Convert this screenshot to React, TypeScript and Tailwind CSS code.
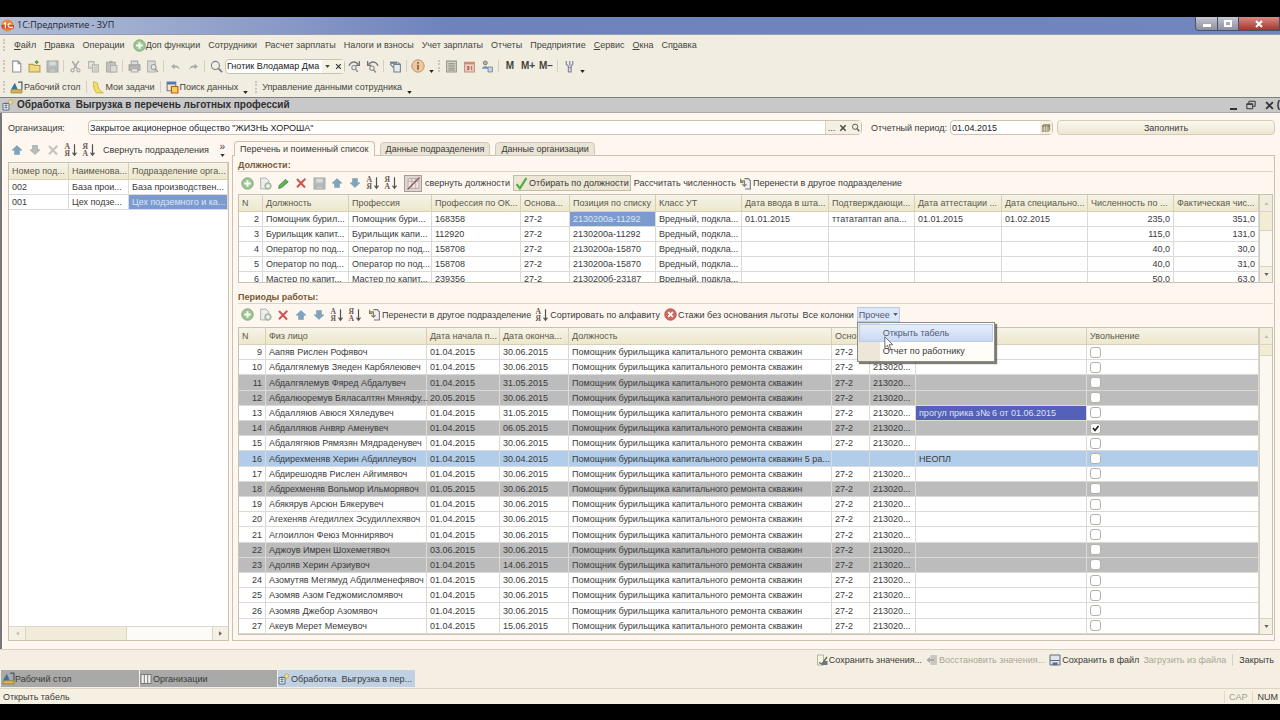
import type { ReactNode } from "react";

const menu = ["Файл", "Правка", "Операции", "Доп функции", "Сотрудники", "Расчет зарплаты", "Налоги и взносы", "Учет зарплаты", "Отчеты", "Предприятие", "Сервис", "Окна", "Справка"];
const underlined: Record<string, number> = { "Файл": 0, "Правка": 0, "Сервис": 0, "Окна": 0, "Справка": 2 };

const departments = [
  ["002", "База прои...", "База производствен..."],
  ["001", "Цех подзе...", "Цех подземного и ка..."],
];

const positionHeads = ["N", "Должность", "Профессия", "Профессия по ОК...", "Основа...", "Позиция по списку", "Класс УТ", "Дата ввода в шта...", "Подтверждающи...", "Дата аттестации ...", "Дата специально...", "Численность по ...", "Фактическая чис..."];
const positions = [
  ["2", "Помощник бурил...", "Помощник бури...", "168358", "27-2", "2130200а-11292", "Вредный, подкла...", "01.01.2015", "ттататаптап апа...", "01.01.2015", "01.02.2015", "235,0", "351,0"],
  ["3", "Бурильщик капит...", "Бурильщик капи...", "112920", "27-2", "2130200а-11292", "Вредный, подкла...", "", "", "", "", "115,0", "131,0"],
  ["4", "Оператор по под...", "Оператор по под...", "158708", "27-2", "2130200а-15870", "Вредный, подкла...", "", "", "", "", "40,0", "30,0"],
  ["5", "Оператор по под...", "Оператор по под...", "158708", "27-2", "2130200а-15870", "Вредный, подкла...", "", "", "", "", "40,0", "31,0"],
  ["6", "Мастер по капит...", "Мастер по капит...", "239356", "27-2", "2130200б-23187", "Вредный, подкла...", "", "", "", "", "50,0", "63,0"],
];

type Period = { n: number; name: string; from: string; to: string; tone?: "gray" | "blue"; note?: string; fired?: boolean };
const periods: Period[] = [
  { n: 9, name: "Аапяв Рислен Рофявоч", from: "01.04.2015", to: "30.06.2015" },
  { n: 10, name: "Абдалгялемув Зяеден Карбялеювеч", from: "01.04.2015", to: "30.06.2015" },
  { n: 11, name: "Абдалгялемув Фяред Абдалувеч", from: "01.04.2015", to: "31.05.2015", tone: "gray" },
  { n: 12, name: "Абдалюоремув Бяласалтян Мяняфу...", from: "20.05.2015", to: "30.06.2015", tone: "gray" },
  { n: 13, name: "Абдалляюв Авюся Хяледувеч", from: "01.04.2015", to: "31.05.2015", note: "прогул прика з№ 6 от 01.06.2015" },
  { n: 14, name: "Абдалляюв Анвяр Аменувеч", from: "01.04.2015", to: "06.05.2015", tone: "gray", fired: true },
  { n: 15, name: "Абдалягяюв Рямязян Мядраденувеч", from: "01.04.2015", to: "30.06.2015" },
  { n: 16, name: "Абдирехменяв Херин Абдиллеувоч", from: "01.04.2015", to: "30.04.2015", tone: "blue", note: "НЕОПЛ" },
  { n: 17, name: "Абдирешодяв Рислен Айгимявоч", from: "01.04.2015", to: "30.06.2015" },
  { n: 18, name: "Абдрехменяв Вольмор Ильморявоч", from: "01.05.2015", to: "30.06.2015", tone: "gray" },
  { n: 19, name: "Абякярув Арсюн Бякерувеч", from: "01.04.2015", to: "30.06.2015" },
  { n: 20, name: "Агехеняв Агедиллех Эсудиллехявоч", from: "01.04.2015", to: "30.06.2015" },
  { n: 21, name: "Аглоиллон Феюз Моннирявоч", from: "01.04.2015", to: "30.06.2015" },
  { n: 22, name: "Аджоув Имрен Шохеметявоч", from: "03.06.2015", to: "30.06.2015", tone: "gray" },
  { n: 23, name: "Адоляв Херин Арзиувоч", from: "01.04.2015", to: "14.06.2015", tone: "gray" },
  { n: 24, name: "Азомутяв Мегямуд Абдилменефявоч", from: "01.04.2015", to: "30.06.2015" },
  { n: 25, name: "Азомяв Азом Геджомисломявоч", from: "01.04.2015", to: "30.06.2015" },
  { n: 26, name: "Азомяв Джебор Азомявоч", from: "01.04.2015", to: "30.06.2015" },
  { n: 27, name: "Акеув Мерет Мемеувоч", from: "01.04.2015", to: "15.06.2015" },
];

const rowTone = { gray: "bg-[#bcbcbc]", blue: "bg-[#b1cdea]" };

function Svg({ children, className = "size-[13px]" }: { children: ReactNode; className?: string }) {
  return (
    <svg viewBox="0 0 12 12" fill="none" className={`${className} shrink-0`} aria-hidden="true">
      {children}
    </svg>
  );
}

const NewDoc = () => <Svg><path d="M2.500 1h5L10 3.500V11H2.500z" fill="#fff" stroke="#8a8f98" /><path d="M7.500 1v2.500H10" stroke="#8a8f98" /></Svg>;
const OpenFolder = () => <Svg><path d="M1 4h4l1 1h5v6H1z" fill="#f1d980" stroke="#b79b4a" /><path d="M8 4V1M6.500 2.500 8 .8l1.600 1.700" stroke="#58a03c" strokeWidth="1.200" /></Svg>;
const Save = () => <Svg><path d="M1 1h10v10H1z" fill="#b9bcbc" stroke="#a3a6a6" /><path d="M3 1.500h6v3.500H3z" fill="#d9dbd8" /><path d="M3 7.500h6V11H3zM3 9h6" fill="#cfd1ce" stroke="#a3a6a6" strokeWidth=".6" /></Svg>;
const Cut = () => <Svg><path d="m3 1 4.500 7M9 1 4.500 8" stroke="#a6a6a2" strokeWidth="1.500" /><circle cx="3.300" cy="9.500" r="1.500" stroke="#a6a6a2" /><circle cx="8.700" cy="9.500" r="1.500" stroke="#a6a6a2" /></Svg>;
const Copy = () => <Svg><path d="M1.500 1.500h5v6h-5z" fill="#e6e4dc" stroke="#b4b3ad" /><path d="M5 4.500h5.500v6.500H5z" fill="#dedcd4" stroke="#b4b3ad" /><path d="M6.500 7h3M6.500 9h3" stroke="#b4b3ad" strokeWidth=".7" /></Svg>;
const Paste = () => <Svg><path d="M1.500 2h8v9h-8z" fill="#c4c3bd" stroke="#aaa9a3" /><path d="M4 .8h3v2H4z" fill="#aaa9a3" /><path d="M5 5h6v6H5z" fill="#dddbd3" stroke="#b4b3ad" /></Svg>;
const Print = () => <Svg><path d="M3 1h6v4H3z" fill="#dedede" stroke="#aaa" /><path d="M1 4.500h10v5H1z" fill="#b4b4b4" stroke="#a0a0a0" /><path d="M3 8h6v3H3z" fill="#e4e4e4" stroke="#aaa" /></Svg>;
const Preview = () => <Svg><path d="M1.500 1h7v10h-7z" fill="#dcdcd8" stroke="#b0b0ac" /><circle cx="7" cy="6.500" r="2.300" fill="#e8e8e8" stroke="#9f9f9f" /><path d="m8.500 8 2.500 3" stroke="#9f9f9f" strokeWidth="1.400" /></Svg>;
const Undo = () => <Svg><path d="M5 3.500 2 6l3 2.500V7c2-.3 3.500 0 5 2-.3-2.700-2-4-5-4z" fill="#a8a8a4" /></Svg>;
const Redo = () => <Svg><path d="m7 3.500 3 2.500-3 2.500V7c-2-.3-3.500 0-5 2 .3-2.700 2-4 5-4z" fill="#a8a8a4" /></Svg>;
const Search = ({ color = "#77828c" }: { color?: string }) => <Svg><circle cx="5" cy="5" r="3.700" stroke={color} /><path d="m7.700 7.700 3.500 3.500" stroke={color} strokeWidth="1.700" /></Svg>;
const FindNext = () => <Svg><path d="M1 5.500C2 1.500 7 .5 9.500 4M10.500 1v4H7" stroke="#6e7377" strokeWidth="1.200" /><circle cx="5.500" cy="7" r="2" stroke="#8a8f93" /><path d="m7 8.500 2 2.500" stroke="#8a8f93" strokeWidth="1.300" /></Svg>;
const FindPrev = () => <Svg><path d="M11 5.500C10 1.500 5 .5 2.500 4M1.500 1v4H5" stroke="#6e7377" strokeWidth="1.200" /><circle cx="5.500" cy="7.500" r="2" stroke="#8a8f93" /><path d="m7 9 2 2.500" stroke="#8a8f93" strokeWidth="1.300" /></Svg>;
const WindowsIcon = () => <Svg><path d="M1 1.500h6.500v2H1z" fill="#667b8c" /><path d="M4.500 4h6v7h-6z" fill="#e8ecee" stroke="#6f8291" /><path d="M1 3.500 4 7M8 2l2.500 2" stroke="#6f8291" /></Svg>;
const Info = () => <Svg className="size-[14px]"><circle cx="6" cy="6" r="5.300" fill="#ecc9a0" stroke="#b98d60" strokeWidth=".8" /><path d="M6 5v4.200M6 2.600v1.400" stroke="#8a5d30" strokeWidth="1.400" /></Svg>;
const List = () => <Svg><path d="M1.500 1h9v10h-9z" fill="#d8d6c8" stroke="#96958a" /><path d="M3 3.500h6M3 5.500h6M3 7.500h6M3 9.300h6" stroke="#77766c" strokeWidth=".8" /></Svg>;
const Calendar = () => (
  <Svg>
    <path d="M1.500 2h9v9h-9z" fill="#efd2c6" stroke="#c08f80" />
    <path d="M1.500 2h9v2h-9z" fill="#d4876f" />
    <path d="M3.500 6h2v1.500h-1.500h1.500V9h-2M7 6.500 8 6v3.500" stroke="#b0604e" strokeWidth=".9" />
  </Svg>
);
const People = () => <Svg><circle cx="4" cy="2.700" r="1.800" fill="#c7b294" stroke="#666" strokeWidth=".7" /><path d="M1 8c0-3 6-3 6 0z" fill="#6f8fb0" /><path d="M6.500 6.500h4V11h-4z" fill="#c9d7e4" stroke="#6c8299" strokeWidth=".8" /></Svg>;
const Wrench = () => <Svg><path d="M3 1v3l2 1.500V11h2.500V5.500L9 4V1M6.200 1v4" stroke="#8d89a5" strokeWidth="1.200" /><path d="M4.500 7h3.500" stroke="#8d89a5" /></Svg>;
const Plus = () => <Svg><circle cx="6" cy="6" r="5.300" fill="#9cc593" stroke="#7ba673" strokeWidth=".8" /><path d="M6 3v6M3 6h6" stroke="#fff" strokeWidth="1.700" /></Svg>;
const AddCopy = () => <Svg><path d="M1.500 1h5L9 3.500V11H1.500z" fill="#eceeee" stroke="#a2a7ab" strokeWidth=".8" /><circle cx="8.300" cy="8.300" r="3" fill="#b8ceb4" stroke="#8fa58c" strokeWidth=".7" /><path d="M8.300 6.500v3.600M6.500 8.300h3.600" stroke="#fff" /></Svg>;
const Pencil = () => <Svg><path d="m1.500 10.500.7-3L8 2.200l2.300 2.300-6 5.300z" fill="#5cb454" stroke="#3b8b38" strokeWidth=".8" /></Svg>;
const Cross = ({ color = "#cf5550" }: { color?: string }) => <Svg className="size-3"><path d="m2 2 8 8.500M10.300 1.800 2 10.300" stroke={color} strokeWidth="2" /></Svg>;
const Up = ({ color = "#7ea5bd" }: { color?: string }) => <Svg className="size-3"><path d="m6 1.500 5 4.700H8.500V10.500h-5V6.200H1z" fill={color} stroke="#6f8894" strokeOpacity=".6" strokeWidth=".7" /></Svg>;
const Down = ({ color = "#7ea5bd" }: { color?: string }) => <Svg className="size-3"><path d="M6 10.500 1 5.800h2.500V1.500h5v4.300H11z" fill={color} stroke="#6f8894" strokeOpacity=".6" strokeWidth=".7" /></Svg>;
function Sort({ top = "А", bottom = "Я" }: { top?: string; bottom?: string }) {
  return (
    <Svg className="size-[14px]">
      <g fontSize="6.500" fontFamily="Liberation Serif, serif" fontWeight="bold" fill="#6b5750">
        <text x=".5" y="5.500">{top}</text>
        <text x=".5" y="11.500">{bottom}</text>
      </g>
      <path d="M9 1v9M7.300 8.300 9 10.500l1.700-2.200" stroke="#55504c" />
    </Svg>
  );
}
const NoFilter = () => <Svg><path d="M1 1.500h10v9H1zM1 4h10M4.500 1.500v9M8 1.500v9" stroke="#a9a19d" strokeWidth=".7" fill="#ece6e2" /><path d="M.5 11.500 11.500.5" stroke="#8f4c55" strokeWidth="1.100" /></Svg>;
const Check = () => <Svg><path d="m1.500 6.500 3 4L10.500 1" stroke="#4fae3f" strokeWidth="2" /></Svg>;
const Move = () => <Svg><path d="M5 1.500h3.500l2 2V11H5.500" stroke="#75767d" fill="#f0f0f2" /><path d="M1 3.500h4v4M1.500 1.500v3.500h2.500" stroke="#8a7d4e" strokeWidth="1.100" /><path d="m3 6.500 2 2 2-2" stroke="#75767d" /></Svg>;
const Stop = () => <Svg><circle cx="6" cy="6" r="5.300" fill="#d4675f" stroke="#b84b45" strokeWidth=".8" /><path d="m3.800 3.800 4.400 4.400M8.200 3.800 3.800 8.200" stroke="#fff" strokeWidth="1.500" /></Svg>;
const Desk = () => <Svg><path d="M1 8h10v3H1z" fill="#d9b64e" stroke="#8d7a3c" strokeWidth=".7" /><path d="m1 7.500 3.500-6 2.500 6z" fill="#3f6f9d" /><path d="M7.500 1h3.500v6.500" stroke="#44576a" strokeWidth="1.100" /></Svg>;
const Note = () => <Svg><path d="M1.500.5 5 2c0 4 2 7 5.500 9H4C2 9 1 5 1.500.5z" fill="#f3de62" stroke="#c4a93c" strokeWidth=".7" /></Svg>;
const DataSearch = () => <Svg><path d="M1 1h8v8H1z" fill="#f5e9b0" stroke="#5f7fb0" /><path d="M1 1h8v2.200H1z" fill="#4f78b8" /><path d="M5 5h6v6H5z" fill="#f6cf4c" stroke="#b9552f" /></Svg>;
const Process = () => <Svg className="size-3"><path d="M1 4.500h6V11H1z" fill="#e7ebee" stroke="#5d7185" /><path d="M2.500 6.500h3M2.500 8.500h3M4 3v6.500" stroke="#5d7185" strokeWidth=".8" /><circle cx="8.700" cy="3" r="2.200" fill="#efdf8a" stroke="#b8a33f" strokeWidth=".7" /></Svg>;
const Columns = () => <Svg className="size-3"><path d="M1 1.500h10v9H1z" fill="#f4f4f4" stroke="#777" /><path d="M4.300 1.500v9M7.700 1.500v9" stroke="#777" /></Svg>;
const SaveValues = () => <Svg className="size-3"><path d="M1.500 1h6v10h-6z" fill="#f4f2e4" stroke="#a8a590" strokeWidth=".8" /><path d="M3 8.500 6 10l5-7" stroke="#596e3c" strokeWidth="1.300" /><path d="M8 7h3.500v4H5z" fill="#6b7684" /></Svg>;
const Restore = () => <Svg className="size-3"><path d="M4.500 1H11v10H4.500z" fill="#c9c7c2" /><path d="M.5 6 4 3v2h4v2H4v2z" fill="#a9a7a2" /></Svg>;
const Disk = () => <Svg className="size-3"><path d="M1 1h10v10H1z" fill="#dfe3ec" stroke="#5d6a86" /><path d="M1.500 6.500h9" stroke="#5d6a86" /><path d="M3.500 8.500h5V11h-5z" fill="#5d6a86" /></Svg>;
const Grid = () => <Svg className="size-[10px]"><path d="M2.500 1.500H11V8l-2 2.500H1V3.500z" fill="#8b8365" /><path d="M1 6h9M1 8.300h9M4 3v7.500M7 2.500v8" stroke="#efead6" strokeWidth=".8" /></Svg>;
const Logo = () => <Svg><circle cx="6" cy="6" r="5.500" fill="#e8863c" /><path d="M0 5.500h12v3.300H1z" fill="#d4482a" /><path d="M2.500 4.500 4 3.500v5M9 4.500c-3-1-3.500 3.500 0 3.300h2" stroke="#fff" strokeWidth="1.100" /></Svg>;

function Caret({ className = "" }: { className?: string }) {
  return (
    <svg viewBox="0 0 6 4" className={`h-[3px] w-[5px] shrink-0 ${className}`} aria-hidden="true">
      <path d="M0 0h6L3 4z" fill="currentColor" />
    </svg>
  );
}

function Tool({ label, children }: { label: string; children: ReactNode }) {
  return (
    <button type="button" aria-label={label} className="flex h-4 w-[18px] shrink-0 items-center justify-center">
      {children}
    </button>
  );
}

function TextTool({ icon, children, className = "" }: { icon?: ReactNode; children: ReactNode; className?: string }) {
  return (
    <button type="button" className={`flex h-4 shrink-0 items-center gap-px whitespace-nowrap ${className}`}>
      {icon}
      {children}
    </button>
  );
}

const Sep = () => <span className="mx-[2px] h-3 w-px shrink-0 bg-[#d3cfc2]" />;
const Grip = () => <span className="mx-[2px] h-3 shrink-0 border-l-2 border-dotted border-[#cbc6b6]" />;
const More = () => <button type="button" aria-label="Еще" className="flex h-4 w-[9px] shrink-0 items-end justify-center pb-px text-[#222]"><Caret /></button>;

function VScroll({ thumb }: { thumb: string }) {
  return (
    <div className="flex w-[13px] shrink-0 flex-col border-l border-[#cfcabb] bg-[#fbf8f2] text-[#6d6a60]">
      <button type="button" aria-label="Вверх" className="flex h-4 items-center justify-center bg-[#f1eddd] text-[#c6c2b2]"><Caret className="rotate-180" /></button>
      <div className={`${thumb} border-y border-[#dcd5bd] bg-[#f1ecd3]`} />
      <div className="flex-1" />
      <button type="button" aria-label="Вниз" className="flex h-4 items-center justify-center border-t border-[#d8d3c3] bg-[#f4f0e4]"><Caret /></button>
    </div>
  );
}

const th = "h-[17px] border-r border-b border-[#d6d0b8] bg-linear-to-b from-[#f6f3ea] to-[#ede7cb] px-[3px] text-left font-normal text-[#5c584a]";
const td = "h-[15px] border-r border-b border-[#dcdad6] px-[3px] py-0";

function MenuLabel({ text }: { text: string }) {
  const at = underlined[text];
  if (at === undefined) return <>{text}</>;
  return <span>{text.slice(0, at)}<u>{text[at]}</u>{text.slice(at + 1)}</span>;
}

function TopBars() {
  return (
    <header className="shrink-0 bg-[#f1eee1] text-[#45443f]">
      <div className="flex h-[18px] items-start border-b border-[#9a9bab] bg-linear-to-r from-[#b4bfd6] via-[#6e83bc] via-35% to-[#7186bd]">
        <div className="flex h-4 flex-1 items-center gap-[3px] pl-px font-['Open_Sans',sans-serif] text-[9px] text-[#1f2533]">
          <Logo />
          <span>1С:Предприятие - ЗУП</span>
        </div>
        <div className="flex h-[14px] overflow-hidden rounded-bl border border-t-0 border-[#48506a] text-white">
          <button type="button" aria-label="Свернуть" className="flex w-[22px] items-center justify-center border-r border-[#48506a] bg-linear-to-b from-[#c3c8d2] to-[#8b8f9f]"><span className="mt-1 h-[3px] w-2 bg-white" /></button>
          <button type="button" aria-label="Развернуть" className="flex w-[21px] items-center justify-center border-r border-[#48506a] bg-linear-to-b from-[#c3c8d2] to-[#8b8f9f]"><span className="h-[7px] w-2 border-2 border-white" /></button>
          <button type="button" aria-label="Закрыть окно" className="flex w-10 items-center justify-center bg-linear-to-b from-[#d78a83] to-[#a92f2f]"><Svg className="size-2"><path d="m1.500 1.500 9 9M10.500 1.500l-9 9" stroke="#fff" strokeWidth="3" /></Svg></button>
        </div>
      </div>

      <nav className="flex h-5 items-center gap-[6px] pl-px">
        <Grip />
        {menu.map((m) => (
          <button key={m} type="button" className="flex items-center whitespace-nowrap px-px">
            {m === "Доп функции" && <Plus />}
            <MenuLabel text={m} />
          </button>
        ))}
      </nav>

      <div className="flex h-[22px] items-center pl-px">
        <Grip />
        <Tool label="Новый"><NewDoc /></Tool>
        <Tool label="Открыть"><OpenFolder /></Tool>
        <Tool label="Сохранить"><Save /></Tool>
        <Sep />
        <Tool label="Вырезать"><Cut /></Tool>
        <Tool label="Копировать"><Copy /></Tool>
        <Tool label="Вставить"><Paste /></Tool>
        <Sep />
        <Tool label="Печать"><Print /></Tool>
        <Tool label="Просмотр"><Preview /></Tool>
        <Sep />
        <Tool label="Отменить"><Undo /></Tool>
        <Tool label="Вернуть"><Redo /></Tool>
        <Sep />
        <Tool label="Найти"><Search /></Tool>
        <div className="flex h-[15px] w-[120px] items-center rounded-sm border border-[#c9c4b0] bg-white">
          <input aria-label="Строка поиска" defaultValue="Гнотик Влодамар Дма" className="min-w-0 flex-1 pl-px text-[#222] outline-none" />
          <button type="button" aria-label="История" className="flex h-full w-[11px] items-center justify-center bg-[#f6f2e4]"><Caret /></button>
          <button type="button" aria-label="Очистить" className="flex h-full w-[11px] items-center justify-center bg-[#f6f2e4]"><Svg className="size-[7px]"><path d="m2 2 8 8M10 2l-8 8" stroke="#333" strokeWidth="2" /></Svg></button>
        </div>
        <Tool label="Найти далее"><FindNext /></Tool>
        <Tool label="Найти ранее"><FindPrev /></Tool>
        <Sep />
        <Tool label="Окна"><WindowsIcon /></Tool>
        <Sep />
        <Tool label="Справка"><Info /></Tool>
        <More />
        <Grip />
        <Tool label="Список"><List /></Tool>
        <Tool label="Календарь"><Calendar /></Tool>
        <Tool label="Пользователи"><People /></Tool>
        <Sep />
        <button type="button" className="w-[18px] text-[10px] font-bold">M</button>
        <button type="button" className="w-[18px] text-[10px] font-bold">M+</button>
        <button type="button" className="w-[18px] text-[10px] font-bold">M−</button>
        <Sep />
        <Tool label="Настройка"><Wrench /></Tool>
        <More />
      </div>

      <div className="flex h-5 items-center gap-[3px] pl-px">
        <Grip />
        <TextTool icon={<Desk />}>Рабочий стол</TextTool>
        <Sep />
        <TextTool icon={<Note />}>Мои задачи</TextTool>
        <Sep />
        <TextTool icon={<DataSearch />}>Поиск данных</TextTool>
        <More />
        <Grip />
        <TextTool>Управление данными сотрудника</TextTool>
        <More />
      </div>
    </header>
  );
}

function Departments() {
  return (
    <section className="flex w-[221px] shrink-0 flex-col">
      <div className="flex h-[21px] items-center pb-[3px]">
        <Tool label="Вверх"><Up /></Tool>
        <Tool label="Вниз"><Down color="#b9bcba" /></Tool>
        <Tool label="Удалить"><Cross color="#c5c3be" /></Tool>
        <Tool label="По возрастанию"><Sort /></Tool>
        <Tool label="По убыванию"><Sort top="Я" bottom="А" /></Tool>
        <TextTool className="pl-[5px]">Свернуть подразделения</TextTool>
        <button type="button" aria-label="Другие команды" className="mr-1 ml-auto flex flex-col items-center gap-1 leading-[6px]"><span className="text-[10px]">»</span><Caret /></button>
      </div>
      <div className="flex flex-1 flex-col border border-[#c8c2ae] bg-white">
        <table className="w-full table-fixed border-separate border-spacing-0 whitespace-nowrap">
          <thead>
            <tr>
              <th className={`${th} w-[60px]`}>Номер под...</th>
              <th className={`${th} w-[60px]`}>Наименова...</th>
              <th className={th}>Подразделение орга...</th>
            </tr>
          </thead>
          <tbody>
            {departments.map((d, r) => (
              <tr key={d[0]}>
                {d.map((cell, c) => (
                  <td key={c} className={r === 1 && c === 2 ? `${td} bg-[#7b9bd0] text-[#dbe6f7]` : td}>{cell}</td>
                ))}
              </tr>
            ))}
          </tbody>
        </table>
        <div className="mt-auto flex h-[14px] border-t border-[#dcd7c8] bg-[#fdfbf7] text-[#66635a]">
          <button type="button" aria-label="Влево" className="flex w-4 items-center justify-center bg-[#f4f0e4] text-[#c6c2b2]"><Caret className="rotate-90" /></button>
          <div className="w-[102px] border-x border-[#dcd5bd] bg-[#f1ecd9]" />
          <button type="button" aria-label="Вправо" className="ml-auto flex w-4 items-center justify-center border-l border-[#dcd7c8] bg-[#f4f0e4]"><Caret className="-rotate-90" /></button>
        </div>
      </div>
    </section>
  );
}

function Positions() {
  const widths = ["w-[24px]", "w-[86px]", "w-[83px]", "w-[89px]", "w-[49px]", "w-[86px]", "w-[86px]", "w-[87px]", "w-[86px]", "w-[87px]", "w-[86px]", "w-[86px]", ""];
  return (
    <section>
      <h2 className="h-[13px] border-b border-[#dad3c6] font-bold text-[#7a5a34]">Должности:</h2>
      <div className="flex h-[22px] items-center">
        <Tool label="Добавить"><Plus /></Tool>
        <Tool label="Скопировать"><AddCopy /></Tool>
        <Tool label="Изменить"><Pencil /></Tool>
        <Tool label="Удалить"><Cross /></Tool>
        <Tool label="Сохранить"><Save /></Tool>
        <Tool label="Вверх"><Up /></Tool>
        <Tool label="Вниз"><Down /></Tool>
        <Tool label="По возрастанию"><Sort /></Tool>
        <Tool label="По убыванию"><Sort top="Я" bottom="А" /></Tool>
        <button type="button" aria-label="Отключить отбор" className="ml-1 flex h-[17px] w-[18px] items-center justify-center border border-[#a59d98] bg-[#ddd5d2]"><NoFilter /></button>
        <TextTool className="px-[3px]">свернуть должности</TextTool>
        <TextTool icon={<Check />} className="border border-[#c2bca8] bg-[#ece6d4] px-px">Отбирать по должности</TextTool>
        <TextTool className="px-[3px]">Рассчитать численность</TextTool>
        <TextTool icon={<Move />}>Перенести в другое подразделение</TextTool>
      </div>
      <div className="flex h-[89px] border border-[#c8c2ae] bg-white">
        <div className="min-w-0 flex-1 overflow-hidden">
          <table className="w-full table-fixed border-separate border-spacing-0 whitespace-nowrap">
            <thead>
              <tr>
                {positionHeads.map((h, i) => (
                  <th key={h} className={`${th} ${widths[i]} overflow-hidden`}>{h}</th>
                ))}
              </tr>
            </thead>
            <tbody>
              {positions.map((row, r) => (
                <tr key={r}>
                  {row.map((cell, c) => (
                    <td
                      key={c}
                      className={`${td} overflow-hidden ${c === 0 || c > 10 ? "text-right" : ""} ${r === 0 && c === 5 ? "bg-[#7b9bd0] text-[#dbe6f7]" : ""}`}
                    >
                      {cell}
                    </td>
                  ))}
                </tr>
              ))}
            </tbody>
          </table>
        </div>
        <VScroll thumb="h-5" />
      </div>
    </section>
  );
}

function OtherMenu() {
  return (
    <div className="relative ml-px">
      <button type="button" aria-haspopup="menu" aria-expanded="true" className="flex h-[15px] items-center gap-[3px] border border-[#b9cbe6] bg-[#dbe6f6] px-px text-[#4e5a78]">
        Прочее <Caret />
      </button>
      <div role="menu" className="absolute top-full left-0 z-10 w-[138px] border border-[#8e8c86] bg-linear-to-r from-[#ece7d8] from-[22px] to-[#fffdf8] to-[22px] p-px shadow-[2px_2px_1px_rgba(70,70,60,0.7)]">
        <button type="button" role="menuitem" className="flex h-[18px] w-full items-center border border-[#bccbe8] bg-linear-to-b from-[#e6eefb] to-[#c9d9f3] pl-[23px] text-[#4e5a78]">Открыть табель</button>
        <button type="button" role="menuitem" className="flex h-[18px] w-full items-center pl-6">Отчет по работнику</button>
      </div>
      <svg viewBox="0 0 12 18" className="pointer-events-none absolute top-[29px] left-[27px] z-20 h-[15px] w-[10px]" aria-hidden="true">
        <path d="M1 1v13l3-3 2.500 6 2-1L6 10.500h4.500z" fill="#fff" stroke="#555" />
      </svg>
    </div>
  );
}

function Periods() {
  return (
    <section className="mt-2 flex min-h-0 flex-1 flex-col">
      <h2 className="h-[13px] border-b border-[#dad3c6] font-bold text-[#7a5a34]">Периоды работы:</h2>
      <div className="flex h-[23px] items-center pb-[2px]">
        <Tool label="Добавить"><Plus /></Tool>
        <Tool label="Скопировать"><AddCopy /></Tool>
        <Tool label="Удалить"><Cross /></Tool>
        <Tool label="Вверх"><Up /></Tool>
        <Tool label="Вниз"><Down /></Tool>
        <Tool label="По возрастанию"><Sort /></Tool>
        <Tool label="По убыванию"><Sort top="Я" bottom="А" /></Tool>
        <TextTool icon={<Move />} className="pr-[2px] pl-1">Перенести в другое подразделение</TextTool>
        <TextTool icon={<Sort />} className="px-[2px]">Сортировать по алфавиту</TextTool>
        <TextTool icon={<Stop />} className="px-[2px]">Стажи без основания льготы</TextTool>
        <TextTool className="px-[2px]">Все колонки</TextTool>
        <OtherMenu />
      </div>
      <div className="flex min-h-0 flex-1 border border-[#c8c2ae] bg-white">
        <div className="min-w-0 flex-1 overflow-hidden">
          <table className="h-full w-full table-fixed border-separate border-spacing-0 whitespace-nowrap">
            <thead>
              <tr>
                <th className={`${th} w-[27px]`}>N</th>
                <th className={`${th} w-[161px]`}>Физ лицо</th>
                <th className={`${th} w-[73px]`}>Дата начала п...</th>
                <th className={`${th} w-[69px]`}>Дата оконча...</th>
                <th className={`${th} w-[263px]`}>Должность</th>
                <th className={`${th} w-[38px]`}>Осно...</th>
                <th className={`${th} w-[46px]`} />
                <th className={`${th} w-[171px]`} />
                <th className={th}>Увольнение</th>
              </tr>
            </thead>
            <tbody>
              {periods.map((p) => (
                <tr key={p.n} className={p.tone && rowTone[p.tone]}>
                  <td className={`${td} text-right`}>{p.n}</td>
                  <td className={td}>{p.name}</td>
                  <td className={td}>{p.from}</td>
                  <td className={td}>{p.to}</td>
                  <td className={td}>Помощник бурильщика капитального ремонта скважин{p.n === 16 && " 5 ра..."}</td>
                  <td className={td}>{p.n !== 16 && "27-2"}</td>
                  <td className={td}>{p.n !== 16 && p.n !== 9 && "213020..."}</td>
                  <td className={p.n === 13 ? `${td} bg-[#5560b8] text-[#dfe3f8]` : td}>{p.note}</td>
                  <td className={td}>
                    <span className="grid size-[11px]">
                      <input
                        type="checkbox"
                        aria-label={`Увольнение ${p.name}`}
                        defaultChecked={p.fired}
                        className="peer col-start-1 row-start-1 size-[11px] appearance-none rounded-[3px] border border-[#b3b1ab] bg-white"
                      />
                      <svg viewBox="0 0 11 11" className="pointer-events-none invisible col-start-1 row-start-1 peer-checked:visible" aria-hidden="true">
                        <path d="m3 5 2 2.500 3.500-4.500" fill="none" stroke="#222" strokeWidth="1.700" />
                      </svg>
                    </span>
                  </td>
                </tr>
              ))}
            </tbody>
          </table>
        </div>
        <VScroll thumb="h-3" />
      </div>
    </section>
  );
}

export default function App() {
  return (
    <div className="flex h-screen min-h-[600px] flex-col overflow-hidden bg-black pt-[17px] pb-4 font-['Liberation_Sans',Arial,sans-serif] text-[9px] leading-3 text-[#3a3a3a]">
      <TopBars />

      <div className="flex h-4 shrink-0 items-center gap-[3px] border-y border-t-[#7f7f7f] border-b-[#a9a9a9] bg-[#c8c8c8] pl-[2px] text-[#2f2f2f]">
        <Process />
        <h1 className="flex-1 text-[10px] font-bold whitespace-pre">Обработка  Выгрузка в перечень льготных профессий</h1>
        <button type="button" aria-label="Свернуть форму" className="flex w-4 items-center justify-center"><span className="mt-[7px] h-[2px] w-[7px] bg-[#333]" /></button>
        <button type="button" aria-label="Восстановить форму" className="flex w-3 items-center justify-center"><Svg className="size-[10px]"><path d="M1 4.500h7v6H1zM3.500 4V1.500H11v6H8.500M1 5.200h7" stroke="#333" strokeWidth="1.200" /></Svg></button>
        <button type="button" aria-label="Закрыть форму" className="flex w-[14px] items-center justify-end"><Svg className="size-[9px]"><path d="m1.500 1.500 9 9M10.500 1.500l-9 9" stroke="#333" strokeWidth="2.400" /></Svg></button>
        <span className="text-[10px] font-bold">(</span>
      </div>

      <main className="flex min-h-0 flex-1 flex-col border-l-2 border-[#77777a] bg-[#fdf7f0] pr-[5px] pl-[6px]">
        <form className="mt-[7px] flex h-[15px] shrink-0 items-center" onSubmit={(e) => e.preventDefault()}>
          <label htmlFor="org" className="w-20 shrink-0">Организация:</label>
          <div className="flex h-[15px] flex-1 items-center rounded-sm border border-[#c9c4b0] bg-white">
            <input id="org" defaultValue={'Закрытое акционерное общество "ЖИЗНЬ ХОРОША"'} className="min-w-0 flex-1 pl-px text-[#222] outline-none" />
            <button type="button" aria-label="Выбрать" className="h-full w-3 border-l border-[#d8d3c0] bg-[#f5f1e2]">...</button>
            <button type="button" aria-label="Очистить" className="flex h-full w-3 items-center justify-center bg-[#f5f1e2]"><Svg className="size-2"><path d="m2 2 8 8M10 2l-8 8" stroke="#444" strokeWidth="2.200" /></Svg></button>
            <button type="button" aria-label="Открыть" className="flex h-full w-3 items-center justify-center bg-[#f5f1e2]"><Svg className="size-[9px]"><circle cx="5.500" cy="5" r="3.500" stroke="#555" strokeWidth="1.300" /><path d="m8 7.500 3 3.500" stroke="#555" strokeWidth="1.800" /></Svg></button>
          </div>
          <label htmlFor="period" className="w-[88px] shrink-0 pl-[9px]">Отчетный период:</label>
          <div className="flex h-[15px] w-[103px] shrink-0 items-center rounded-sm border border-[#c9c4b0] bg-white">
            <input id="period" defaultValue="01.04.2015" className="min-w-0 flex-1 pl-px text-[#222] outline-none" />
            <button type="button" aria-label="Календарь" className="flex h-full w-3 items-center justify-center bg-[#f5f1e2]"><Grid /></button>
          </div>
          <button type="button" className="ml-1 h-[15px] w-[218px] shrink-0 rounded-sm border border-[#d3cdb8] bg-linear-to-b from-[#fbf8ee] to-[#ece6d2]">Заполнить</button>
        </form>

        <div className="mt-[6px] mb-2 flex min-h-0 flex-1 gap-[3px]">
          <Departments />
          <div className="flex min-w-0 flex-1 flex-col">
            <div role="tablist" className="z-1 -mb-px flex h-[15px] shrink-0 items-end gap-[5px] pl-[2px]">
              <button type="button" role="tab" aria-selected="true" className="h-[15px] rounded-t-sm border border-b-0 border-[#c8c2ae] bg-[#fdf7f0] px-[5px]">Перечень и поименный список</button>
              <button type="button" role="tab" className="h-[14px] rounded-t-sm border border-[#cfc9b8] bg-[#e9e4d6] px-[5px]">Данные подразделения</button>
              <button type="button" role="tab" className="h-[14px] rounded-t-sm border border-[#cfc9b8] bg-[#e9e4d6] px-[5px]">Данные организации</button>
            </div>
            <div className="flex min-h-0 flex-1 flex-col border border-[#c8c2ae] pt-[3px] pr-px pb-[5px] pl-[5px]">
              <Positions />
              <Periods />
            </div>
          </div>
        </div>
      </main>

      <div className="flex h-[21px] shrink-0 items-center justify-end gap-1 border-t border-[#d6d0c0] bg-[#f4efe2] pr-[6px]">
        <TextTool icon={<SaveValues />}>Сохранить значения...</TextTool>
        <TextTool icon={<Restore />} className="text-[#aaa697]">Восстановить значения...</TextTool>
        <TextTool icon={<Disk />}>Сохранить в файл</TextTool>
        <TextTool className="text-[#aaa697]">Загрузить из файла</TextTool>
        <Sep />
        <TextTool>Закрыть</TextTool>
      </div>

      <div className="flex h-[18px] shrink-0 gap-px bg-[#f4efe2] pb-px pl-px">
        <button type="button" className="flex w-[138px] items-center bg-[#a9a9a9] pl-px"><Desk />Рабочий стол</button>
        <button type="button" className="flex w-[137px] items-center gap-px bg-[#a9a9a9]"><Columns />Организации</button>
        <button type="button" className="flex w-[137px] items-center gap-px bg-[#c0d1e4] whitespace-pre"><Process />Обработка  Выгрузка в пер...</button>
      </div>

      <footer className="flex h-4 shrink-0 items-center gap-1 border-t border-[#ddd5c3] bg-[#f6f0e2] pl-[3px]">
        <span className="flex-1">Открыть табель</span>
        <span className="border-x border-[#e0d9c8] px-1 text-[#a09c8e]">CAP</span>
        <span className="pr-[2px] pl-px">NUM</span>
      </footer>
    </div>
  );
}
